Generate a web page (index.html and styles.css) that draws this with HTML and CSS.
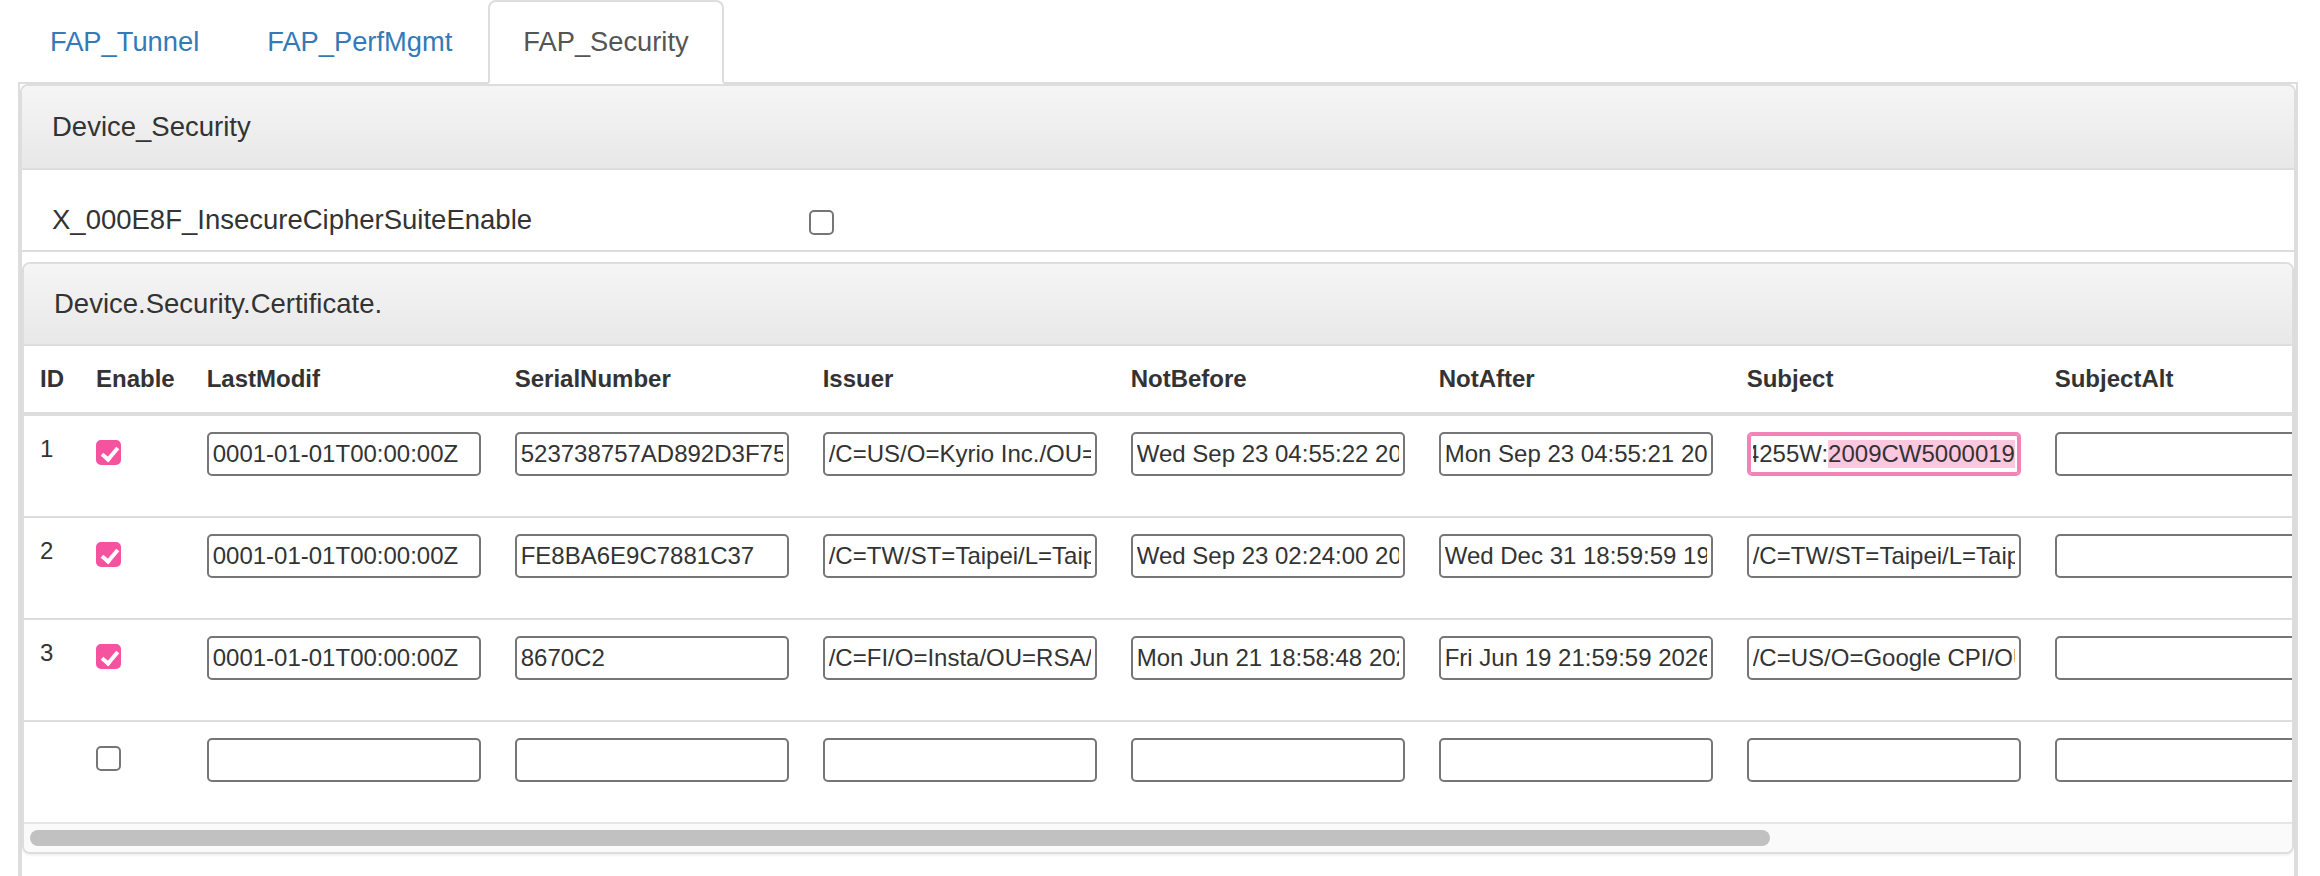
FILE: index.html
```html
<!DOCTYPE html>
<html lang="en">
<head>
<meta charset="utf-8">
<title>FAP_Security</title>
<link rel="stylesheet" href="styles.css">
</head>
<body>
<div class="page">
  <ul class="nav-tabs">
    <li class="tab"><a class="tab-link" href="#">FAP_Tunnel</a></li>
    <li class="tab"><a class="tab-link" href="#">FAP_PerfMgmt</a></li>
    <li class="tab tab--active"><a class="tab-link" href="#">FAP_Security</a></li>
  </ul>
  <div class="tab-content">
    <section class="panel panel--outer">
      <div class="panel-heading">Device_Security</div>
      <div class="param-row">
        <div class="param-label">X_000E8F_InsecureCipherSuiteEnable</div>
        <div class="param-value"><input type="checkbox" class="check"></div>
      </div>
      <section class="panel panel--inner">
        <div class="panel-heading panel-heading--inner">Device.Security.Certificate.</div>
        <div class="table-scroll">
          <table class="cert-table">
            <thead>
              <tr>
                <th class="col-narrow">ID</th>
                <th class="col-narrow">Enable</th>
                <th>LastModif</th>
                <th>SerialNumber</th>
                <th>Issuer</th>
                <th>NotBefore</th>
                <th>NotAfter</th>
                <th>Subject</th>
                <th>SubjectAlt</th>
              </tr>
            </thead>
            <tbody>
              <tr>
                <td class="col-narrow">1</td>
                <td class="col-narrow"><input type="checkbox" class="check check--row" checked></td>
                <td><input class="cell-input" type="text" value="0001-01-01T00:00:00Z"></td>
                <td><input class="cell-input" type="text" value="523738757AD892D3F75E1C0B4A2F"></td>
                <td><input class="cell-input" type="text" value="/C=US/O=Kyrio Inc./OU=DOCSIS/CN=CBRS Root CA"></td>
                <td><input class="cell-input" type="text" value="Wed Sep 23 04:55:22 2020 GMT"></td>
                <td><input class="cell-input" type="text" value="Mon Sep 23 04:55:21 2030 GMT"></td>
                <td><input class="cell-input cell-input--active" id="subject-1" type="text" value="/C=US/O=Kyrio Inc./OU=DOCSIS/CN=SCE4255W:2009CW5000019"></td>
                <td><input class="cell-input" type="text" value=""></td>
              </tr>
              <tr>
                <td class="col-narrow">2</td>
                <td class="col-narrow"><input type="checkbox" class="check check--row" checked></td>
                <td><input class="cell-input" type="text" value="0001-01-01T00:00:00Z"></td>
                <td><input class="cell-input" type="text" value="FE8BA6E9C7881C37"></td>
                <td><input class="cell-input" type="text" value="/C=TW/ST=Taipei/L=Taipei/O=Sercomm/CN=Sercomm CA"></td>
                <td><input class="cell-input" type="text" value="Wed Sep 23 02:24:00 2020 GMT"></td>
                <td><input class="cell-input" type="text" value="Wed Dec 31 18:59:59 1969 GMT"></td>
                <td><input class="cell-input" type="text" value="/C=TW/ST=Taipei/L=Taipei/O=Sercomm/CN=Sercomm CA"></td>
                <td><input class="cell-input" type="text" value=""></td>
              </tr>
              <tr>
                <td class="col-narrow">3</td>
                <td class="col-narrow"><input type="checkbox" class="check check--row" checked></td>
                <td><input class="cell-input" type="text" value="0001-01-01T00:00:00Z"></td>
                <td><input class="cell-input" type="text" value="8670C2"></td>
                <td><input class="cell-input" type="text" value="/C=FI/O=Insta/OU=RSA/CN=Insta Root CA"></td>
                <td><input class="cell-input" type="text" value="Mon Jun 21 18:58:48 2021 GMT"></td>
                <td><input class="cell-input" type="text" value="Fri Jun 19 21:59:59 2026 GMT"></td>
                <td><input class="cell-input" type="text" value="/C=US/O=Google CPI/OU=SAS/CN=Google SAS CA"></td>
                <td><input class="cell-input" type="text" value=""></td>
              </tr>
              <tr>
                <td class="col-narrow"></td>
                <td class="col-narrow"><input type="checkbox" class="check check--row"></td>
                <td><input class="cell-input" type="text" value=""></td>
                <td><input class="cell-input" type="text" value=""></td>
                <td><input class="cell-input" type="text" value=""></td>
                <td><input class="cell-input" type="text" value=""></td>
                <td><input class="cell-input" type="text" value=""></td>
                <td><input class="cell-input" type="text" value=""></td>
                <td><input class="cell-input" type="text" value=""></td>
              </tr>
            </tbody>
          </table>
        </div>
        <div class="hscroll">
          <div class="hscroll-thumb"></div>
        </div>
      </section>
    </section>
  </div>
</div>
<script src="script.js"></script>
</body>
</html>
```

FILE: styles.css
```css
html, body {
  margin: 0;
  padding: 0;
  overflow: hidden;
  background: #fff;
}

body {
  font-family: "Liberation Sans", Arial, Helvetica, sans-serif;
  color: #333;
}

.page {
  padding: 0 22px 0 18px;
}

/* Tabs */
.nav-tabs {
  display: flex;
  margin: 0;
  padding: 0;
  list-style: none;
  border-bottom: 2px solid #ddd;
}

.tab {
  margin-bottom: -2px;
}

.tab-link {
  display: block;
  margin-right: 4px;
  padding: 0 30px;
  line-height: 80px;
  font-size: 27.3px;
  color: #337ab7;
  text-decoration: none;
  border: 2px solid transparent;
  border-radius: 8px 8px 0 0;
}

.tab--active .tab-link {
  padding: 0 33px;
  color: #555;
  background: #fff;
  border-color: #ddd #ddd transparent;
}

/* Tab content */
.tab-content {
  border-left: 2px solid #ddd;
  border-right: 2px solid #ddd;
}

.panel {
  background: #fff;
  border: 2px solid #ddd;
  border-radius: 8px;
}

.panel--outer {
  padding-bottom: 60px;
}

.panel--inner {
  margin-top: 10px;
  box-shadow: 0 2px 2px rgba(0, 0, 0, 0.05);
  overflow: hidden;
}

.panel-heading {
  height: 82px;
  line-height: 82px;
  padding: 0 30px;
  font-size: 27.5px;
  color: #333;
  background: linear-gradient(to bottom, #f5f5f5 0%, #e8e8e8 100%);
  border-bottom: 2px solid #ddd;
  border-radius: 6px 6px 0 0;
}

.panel-heading--inner {
  height: 80px;
  line-height: 80px;
}

/* Parameter row */
.param-row {
  display: grid;
  grid-template-columns: 1fr 2fr;
  align-items: center;
  padding: 30px 0 10px;
  border-bottom: 2px solid #ddd;
}

.param-label,
.param-value {
  padding: 0 30px;
  line-height: 40px;
  font-size: 27.5px;
}

.param-value {
  display: flex;
  align-items: center;
  height: 40px;
}

.param-value .check {
  margin-top: 4px;
}

/* Checkbox */
.check {
  -webkit-appearance: none;
  appearance: none;
  position: relative;
  display: block;
  box-sizing: border-box;
  width: 25px;
  height: 25px;
  margin: 0;
  background: #fff;
  border: 2px solid #767676;
  border-radius: 5px;
}

.check:checked {
  background: #f5529f;
  border-color: #f5529f;
}

.check:checked::after {
  content: "";
  position: absolute;
  left: 7px;
  top: 2px;
  width: 6px;
  height: 13px;
  border-right: 4px solid #fff;
  border-bottom: 4px solid #fff;
  transform: rotate(40deg);
}

.check--row {
  margin-top: 8px;
}

/* Table */
.table-scroll {
  overflow: hidden;
}

.cert-table {
  border-collapse: separate;
  border-spacing: 0;
  font-size: 24px;
  color: #333;
}

.cert-table th {
  padding: 16px 18px 16px 16px;
  line-height: 34px;
  text-align: left;
  font-weight: bold;
  white-space: nowrap;
  vertical-align: bottom;
  border-bottom: 4px solid #ddd;
}

.cert-table td {
  padding: 16px 18px 16px 16px;
  line-height: 34px;
  vertical-align: top;
  border-top: 2px solid #ddd;
}

.cert-table tbody tr:first-child td {
  border-top: 0;
}

.cert-table tbody tr:last-child td {
  border-bottom: 2px solid #e6e6e6;
}

.cert-table .col-narrow {
  padding-right: 16px;
}

.cell-input {
  display: block;
  box-sizing: border-box;
  width: 274px;
  height: 44px;
  margin: 0 0 24px;
  padding: 2px 4px;
  font-family: "Liberation Sans", Arial, Helvetica, sans-serif;
  font-size: 24px;
  color: #333;
  background: #fff;
  border: 2px solid #767676;
  border-radius: 5px;
  outline: none;
}

.cell-input--active {
  border-color: #f283b7;
  box-shadow: inset 0 0 0 2px #f283b7;
}

.cell-input::selection {
  background: #fbc8e0;
  color: #333;
}

/* Horizontal scrollbar of the table */
.hscroll {
  height: 28px;
  padding: 6px;
  box-sizing: border-box;
  background: #fafafa;
}

.hscroll-thumb {
  width: 1740px;
  height: 16px;
  border-radius: 8px;
  background: #c1c1c1;
}
```

FILE: script.js
```js
(function () {
  var el = document.getElementById('subject-1');
  if (!el) return;
  var v = el.value;
  var start = v.indexOf('2009CW');
  el.focus();
  el.setSelectionRange(start, v.length, 'forward');
  el.scrollLeft = el.scrollWidth;
})();
```
